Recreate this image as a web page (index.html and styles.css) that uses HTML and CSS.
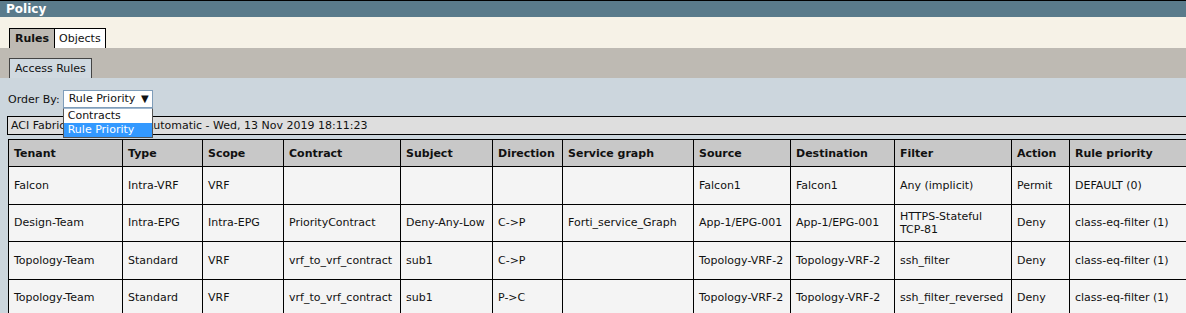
FILE: index.html
```html
<!DOCTYPE html>
<html lang="en">

<head>
    <meta charset="UTF-8">
    <title>Policy</title>
    <link rel="stylesheet" href="styles.css">
</head>

<body>
    <div class="title-bar">Policy</div>

    <!-- 主頁籤 -->
    <div class="tab-row">
        <span class="tab tab-active">Rules</span><span class="tab">Objects</span>
    </div>

    <!-- 子頁籤 -->
    <div class="sub-row">
        <span class="sub-tab">Access Rules</span>
    </div>

    <main class="content">
        <div class="order-row">
            <span class="order-label">Order By:</span>
            <div class="select-wrap">
                <div class="select-box">Rule Priority <span class="arrow">&#9660;</span></div>
                <ul class="select-list">
                    <li>Contracts</li>
                    <li class="picked">Rule Priority</li>
                </ul>
            </div>
        </div>

        <div class="status-bar">ACI Fabric Polling Mode: Automatic - Wed, 13 Nov 2019 18:11:23</div>

        <table class="rules">
            <colgroup>
                <col style="width:114px">
                <col style="width:80px">
                <col style="width:81px">
                <col style="width:117px">
                <col style="width:92px">
                <col style="width:70px">
                <col style="width:131px">
                <col style="width:97px">
                <col style="width:104px">
                <col style="width:117px">
                <col style="width:58px">
                <col style="width:140px">
            </colgroup>
            <thead>
                <tr>
                    <th>Tenant</th>
                    <th>Type</th>
                    <th>Scope</th>
                    <th>Contract</th>
                    <th>Subject</th>
                    <th>Direction</th>
                    <th>Service graph</th>
                    <th>Source</th>
                    <th>Destination</th>
                    <th>Filter</th>
                    <th>Action</th>
                    <th>Rule priority</th>
                </tr>
            </thead>
            <tbody>
                <tr>
                    <td>Falcon</td>
                    <td>Intra-VRF</td>
                    <td>VRF</td>
                    <td></td>
                    <td></td>
                    <td></td>
                    <td></td>
                    <td>Falcon1</td>
                    <td>Falcon1</td>
                    <td>Any (implicit)</td>
                    <td>Permit</td>
                    <td>DEFAULT (0)</td>
                </tr>
                <tr>
                    <td>Design-Team</td>
                    <td>Intra-EPG</td>
                    <td>Intra-EPG</td>
                    <td>PriorityContract</td>
                    <td>Deny-Any-Low</td>
                    <td>C-&gt;P</td>
                    <td>Forti_service_Graph</td>
                    <td>App-1/EPG-001</td>
                    <td>App-1/EPG-001</td>
                    <td>HTTPS-Stateful<br>TCP-81</td>
                    <td>Deny</td>
                    <td>class-eq-filter (1)</td>
                </tr>
                <tr>
                    <td>Topology-Team</td>
                    <td>Standard</td>
                    <td>VRF</td>
                    <td>vrf_to_vrf_contract</td>
                    <td>sub1</td>
                    <td>C-&gt;P</td>
                    <td></td>
                    <td>Topology-VRF-2</td>
                    <td>Topology-VRF-2</td>
                    <td>ssh_filter</td>
                    <td>Deny</td>
                    <td>class-eq-filter (1)</td>
                </tr>
                <tr>
                    <td>Topology-Team</td>
                    <td>Standard</td>
                    <td>VRF</td>
                    <td>vrf_to_vrf_contract</td>
                    <td>sub1</td>
                    <td>P-&gt;C</td>
                    <td></td>
                    <td>Topology-VRF-2</td>
                    <td>Topology-VRF-2</td>
                    <td>ssh_filter_reversed</td>
                    <td>Deny</td>
                    <td>class-eq-filter (1)</td>
                </tr>
            </tbody>
        </table>
    </main>
</body>

</html>
```

FILE: styles.css
```css
* {
    box-sizing: border-box;
    margin: 0px;
    padding: 0px;
}

body {
    font-family: "DejaVu Sans", Verdana, sans-serif;
    font-size: 11px;
    color: #111;
    background-color: #ccd6dd;
    overflow: hidden;
    width: 1186px;
    height: 313px;
}

/* 標題列 */
.title-bar {
    height: 17px;
    border-top: 1px solid #000;
    background-color: #5a7b8b;
    color: #fff;
    font-weight: bold;
    font-size: 12px;
    line-height: 16px;
    padding-left: 6px;
}

/* 主頁籤 */
.tab-row {
    height: 31px;
    background-color: #f6f2e7;
    padding: 11px 0px 0px 9px;
    display: flex;
}

.tab {
    height: 20px;
    border: 1px solid #000;
    border-bottom: none;
    background-color: #fff;
    padding: 0px 4px;
    line-height: 19px;
    font-size: 11px;
}

.tab-active {
    background-color: #bebab3;
    font-weight: bold;
    border-right: none;
    padding: 0px 5px;
}

/* 子頁籤 */
.sub-row {
    height: 30px;
    background-color: #bebab3;
    padding: 10px 0px 0px 9px;
    display: flex;
}

.sub-tab {
    height: 20px;
    border: 1px solid #444;
    border-bottom: none;
    background-color: #d0d9e0;
    padding: 0px 5px;
    line-height: 19px;
}

.content {
    padding: 12px 0px 0px 0px;
}

.order-row {
    display: flex;
    align-items: center;
    padding-left: 8px;
    gap: 3px;
    height: 18px;
}

.select-wrap {
    position: relative;
}

.select-box {
    width: 90px;
    height: 18px;
    border: 1px solid #7f9db9;
    background-color: #fff;
    line-height: 16px;
    padding-left: 5px;
    font-size: 11px;
}

.arrow {
    font-size: 10px;
    position: absolute;
    right: 4px;
    top: 1px;
}

/* 打開的下拉選單 */
.select-list {
    list-style: none;
    position: absolute;
    left: 0px;
    top: 18px;
    width: 90px;
    border: 1px solid #555;
    border-top: 1px solid #a0b8d0;
    background-color: #fff;
    z-index: 5;
}

.select-list li {
    height: 14px;
    line-height: 13px;
    padding-left: 4px;
}

.select-list .picked {
    background-color: #3399ff;
    color: #fff;
}

/* 狀態列 */
.status-bar {
    margin: 8px 0px 0px 7px;
    height: 19px;
    border: 1px solid #000;
    border-right: none;
    background-color: #dedede;
    line-height: 17px;
    padding-left: 3px;
    white-space: nowrap;
}

/* 規則表格 */
.rules {
    margin: 4px 0px 0px 8px;
    border-collapse: collapse;
    table-layout: fixed;
    width: 1201px;
    border: 1px solid #777;
}

.rules th,
.rules td {
    border: 1px solid #000;
    text-align: left;
    vertical-align: middle;
    padding: 0px 5px;
    line-height: 13px;
    white-space: nowrap;
}

.rules th {
    height: 27px;
    background-color: #c8c8c8;
    font-weight: bold;
}

.rules td {
    height: 37.5px;
    background-color: #f4f4f4;
}
```
